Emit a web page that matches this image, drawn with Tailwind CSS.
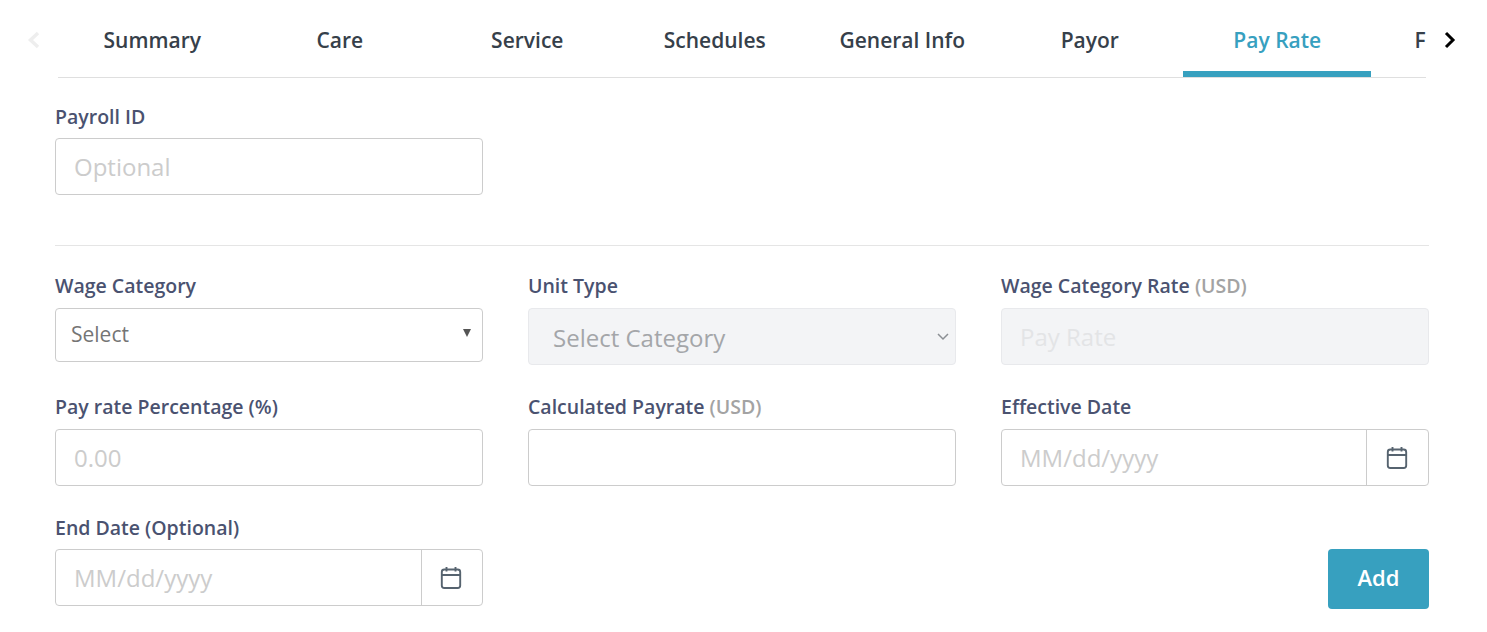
<!DOCTYPE html>
<html lang="en">
  <head>
    <meta charset="UTF-8" />
    <title>Pay Rate</title>
    <script src="https://cdn.jsdelivr.net/npm/@tailwindcss/browser@4"></script>
  </head>
  <body class="bg-white font-['Open_Sans',sans-serif] w-[1487px] h-[632px] overflow-hidden">
    <!-- Tabs -->
    <div class="flex items-start h-[78px]">
      <div class="w-[58px] h-[78px] pl-[27px] pt-[31px] shrink-0">
        <svg width="14" height="18" viewBox="0 0 14 18" fill="none" stroke="#eeeeee" stroke-width="3.5"><path d="M11 2 L3.5 9 L11 16" /></svg>
      </div>
      <div class="w-[1368px] h-[78px] overflow-hidden flex border-b border-[#dfdfdf] shrink-0">
        <div class="w-[187.5px] shrink-0 h-[77px] pl-[1px] pt-[26px] text-center text-[21px] leading-[28px] font-semibold text-[#36404a]">Summary</div>
        <div class="w-[187.5px] shrink-0 h-[77px] pl-[1px] pt-[26px] text-center text-[21px] leading-[28px] font-semibold text-[#36404a]">Care</div>
        <div class="w-[187.5px] shrink-0 h-[77px] pl-[1px] pt-[26px] text-center text-[21px] leading-[28px] font-semibold text-[#36404a]">Service</div>
        <div class="w-[187.5px] shrink-0 h-[77px] pl-[1px] pt-[26px] text-center text-[21px] leading-[28px] font-semibold text-[#36404a]">Schedules</div>
        <div class="w-[187.5px] shrink-0 h-[77px] pl-[1px] pt-[26px] text-center text-[21px] leading-[28px] font-semibold text-[#36404a]">General Info</div>
        <div class="w-[187.5px] shrink-0 h-[77px] pl-[1px] pt-[26px] text-center text-[21px] leading-[28px] font-semibold text-[#36404a]">Payor</div>
        <div class="w-[187.5px] shrink-0 h-[77px] pl-[1px] pt-[26px] text-center text-[21px] leading-[28px] font-semibold text-[#37a0bf] border-b-[6px] border-[#37a0bf]">Pay Rate</div>
        <div class="w-[187.5px] shrink-0 h-[77px] pt-[26px] pl-[44px] text-[21px] leading-[28px] font-semibold text-[#36404a]">F</div>
      </div>
      <div class="pl-[17px] pt-[31px] shrink-0">
        <svg width="14" height="18" viewBox="0 0 14 18" fill="none" stroke="#000000" stroke-width="3"><path d="M3 2 L10 9 L3 16" /></svg>
      </div>
    </div>

    <div class="px-[55px] w-[1484px]">
      <!-- Payroll ID -->
      <div class="pt-[26px] w-[428px]">
        <label class="block text-[19.5px] leading-[25px] font-semibold text-[#4a5270] mb-[9px]">Payroll ID</label>
        <input placeholder="Optional" class="w-full h-[57px] px-[18px] border border-[#cccccc] rounded-[4px] text-[24px] placeholder:text-[#cccccc] outline-none" />
      </div>

      <div class="border-t border-[#e5e5e5] mt-[50px] w-[1374px]"></div>

      <div class="grid grid-cols-[428px_428px_428px] gap-x-[45px] w-[1374px] pt-[27px]">
        <!-- row 1 -->
        <div class="h-[121px]">
          <label class="block text-[19.5px] leading-[25px] font-semibold text-[#4a5270] mb-[10px]">Wage Category</label>
          <div class="relative h-[54px] border border-[#cccccc] rounded-[4px] pl-[15px] text-[21px] leading-[50px] text-[#757575]">
            Select
            <span class="absolute right-[11px] top-[20px] w-0 h-0 border-x-[4px] border-x-transparent border-t-[8px] border-t-[#555555]"></span>
          </div>
        </div>
        <div class="h-[121px]">
          <label class="block text-[19.5px] leading-[25px] font-semibold text-[#4a5270] mb-[10px]">Unit Type</label>
          <div class="relative h-[57px] border border-[#e8e9ec] bg-[#f3f4f6] rounded-[4px] pl-[24px] text-[24px] leading-[57px] text-[#a4a6a9]">
            Select Category
            <svg class="absolute right-[5px] top-[21px]" width="14" height="14" viewBox="0 0 14 14" fill="none" stroke="#8b8f94" stroke-width="1.5"><path d="M2 4 L7 9 L12 4" /></svg>
          </div>
        </div>
        <div class="h-[121px]">
          <label class="block text-[19.5px] leading-[25px] font-semibold text-[#4a5270] mb-[10px]">Wage Category Rate <span class="text-[#a3a3a3]">(USD)</span></label>
          <input disabled placeholder="Pay Rate" class="w-full h-[57px] px-[18px] border border-[#e8e9ec] bg-[#f3f4f6] rounded-[4px] text-[24px] placeholder:text-[#e3e4e6] outline-none" />
        </div>

        <!-- row 2 -->
        <div class="h-[121px]">
          <label class="block text-[19.5px] leading-[25px] font-semibold text-[#4a5270] mb-[10px]">Pay rate Percentage (%)</label>
          <input placeholder="0.00" class="w-full h-[57px] px-[18px] border border-[#cccccc] rounded-[4px] text-[24px] placeholder:text-[#cccccc] outline-none" />
        </div>
        <div class="h-[121px]">
          <label class="block text-[19.5px] leading-[25px] font-semibold text-[#4a5270] mb-[10px]">Calculated Payrate <span class="text-[#a3a3a3]">(USD)</span></label>
          <input class="w-full h-[57px] px-[18px] border border-[#cccccc] rounded-[4px] text-[24px] outline-none" />
        </div>
        <div class="h-[121px]">
          <label class="block text-[19.5px] leading-[25px] font-semibold text-[#4a5270] mb-[10px]">Effective Date</label>
          <div class="flex h-[57px] border border-[#cccccc] rounded-[4px]">
            <input placeholder="MM/dd/yyyy" class="flex-1 min-w-0 px-[18px] text-[24px] placeholder:text-[#cccccc] outline-none" />
            <div class="w-[62px] border-l border-[#cccccc] flex items-center justify-center">
              <svg class="-ml-[2px]" width="22" height="24" viewBox="0 0 22 24" fill="none" stroke="#56636f" stroke-width="1.9"><rect x="1.8" y="3.5" width="18.4" height="18.5" rx="2.5" /><path d="M1.8 9 H20.2 M6.5 1 V5.5 M15.5 1 V5.5" /></svg>
            </div>
          </div>
        </div>

        <!-- row 3 -->
        <div>
          <label class="block text-[19.5px] leading-[25px] font-semibold text-[#4a5270] mb-[9px]">End Date (Optional)</label>
          <div class="flex h-[57px] border border-[#cccccc] rounded-[4px]">
            <input placeholder="MM/dd/yyyy" class="flex-1 min-w-0 px-[18px] text-[24px] placeholder:text-[#cccccc] outline-none" />
            <div class="w-[61px] border-l border-[#cccccc] flex items-center justify-center">
              <svg class="-ml-[2px]" width="22" height="24" viewBox="0 0 22 24" fill="none" stroke="#56636f" stroke-width="1.9"><rect x="1.8" y="3.5" width="18.4" height="18.5" rx="2.5" /><path d="M1.8 9 H20.2 M6.5 1 V5.5 M15.5 1 V5.5" /></svg>
            </div>
          </div>
        </div>
        <div></div>
        <div class="flex justify-end items-start pt-[34px]">
          <button class="w-[101px] h-[60px] pb-[3px] bg-[#37a0bf] rounded-[4px] text-white text-[22px] font-semibold">Add</button>
        </div>
      </div>
    </div>
  </body>
</html>
